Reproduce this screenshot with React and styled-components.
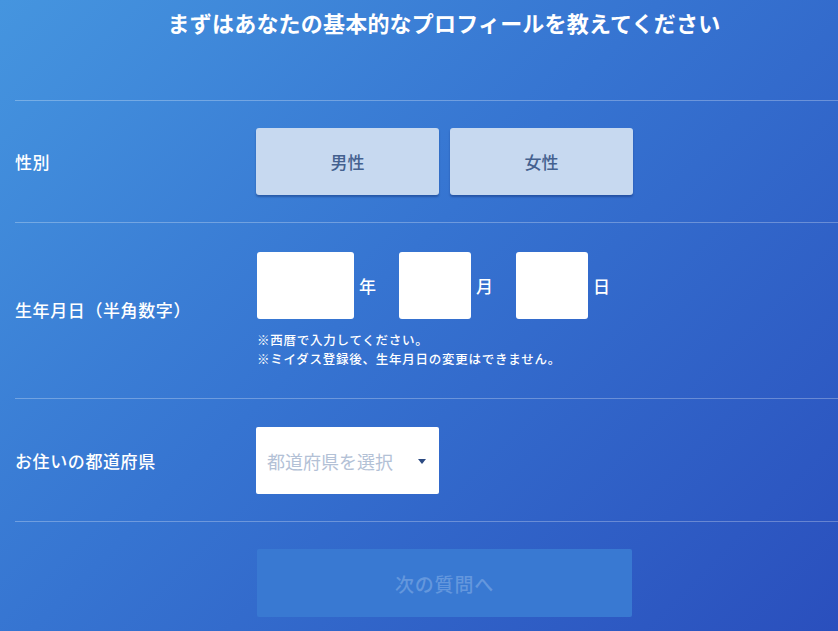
import React from 'react';
import styled, { createGlobalStyle } from 'styled-components';

const GlobalStyle = createGlobalStyle`
  html, body {
    margin: 0;
    padding: 0;
  }
  body {
    font-family: "Noto Sans CJK JP", "Noto Sans", sans-serif;
  }
  * {
    box-sizing: border-box;
  }
`;

// Page shell
const Page = styled.div`
  min-height: 631px;
  background: linear-gradient(135deg, #4595df 0%, #3674d1 45%, #2a4fbd 100%);
  overflow: hidden;
`;

const Header = styled.header`
  height: 100px;
  padding-top: 8px;
  text-align: center;
`;

const Title = styled.h1`
  margin: 0;
  padding-left: 50px;
  font-size: 22px;
  line-height: 28px;
  font-weight: 700;
  color: #fff;
  letter-spacing: 0.2px;
`;

const Form = styled.div`
  margin-left: 15px;
`;

const Row = styled.section`
  display: grid;
  grid-template-columns: 241px 1fr;
  align-items: center;
  border-top: 1px solid rgba(255, 255, 255, 0.28);
  padding: ${(p) => p.$pad || '27px 0 27px'};
`;

const Label = styled.div`
  color: #fff;
  font-size: 17px;
  font-weight: 500;
  line-height: 24px;
  letter-spacing: 0.6px;
`;

const Choices = styled.div`
  display: flex;
  gap: 11px;
`;

const ChoiceButton = styled.button`
  width: 183px;
  height: 67px;
  border: none;
  border-radius: 3px;
  background: #c7d9f0;
  box-shadow: 0 2px 2px rgba(10, 30, 90, 0.35);
  color: #44618f;
  font-family: inherit;
  font-size: 17px;
  font-weight: 500;
  cursor: pointer;
`;

const DateLine = styled.div`
  display: flex;
  align-items: center;
  padding-left: 1px;
`;

const DateBox = styled.input`
  width: ${(p) => p.$w}px;
  height: 67px;
  border: none;
  border-radius: 3px;
  background: #fff;
  padding: 0 8px;
  font-family: inherit;
  font-size: 18px;
  outline: none;
`;

const Unit = styled.span`
  margin: 0 23px 0 5px;
  color: #fff;
  font-size: 17px;
  font-weight: 500;
`;

const Notes = styled.div`
  margin-top: 11px;
  padding-left: 1px;
  color: #fff;
  font-size: 12.5px;
  font-weight: 500;
  line-height: 19px;
  letter-spacing: 0.75px;
`;

const Select = styled.div`
  display: flex;
  align-items: center;
  justify-content: space-between;
  width: 183px;
  height: 67px;
  padding: 0 13px 0 11px;
  border-radius: 2px;
  background: #fff;
  color: #b3c1d6;
  font-size: 18px;
`;

const Caret = styled.span`
  width: 0;
  height: 0;
  border-left: 4.5px solid transparent;
  border-right: 4.5px solid transparent;
  border-top: 5px solid #2c4a82;
  margin-top: 2px;
`;

const Footer = styled.div`
  border-top: 1px solid rgba(255, 255, 255, 0.28);
  padding: 27px 0 0 242px;
`;

const NextButton = styled.button`
  width: 375px;
  height: 68px;
  border: none;
  border-radius: 2px;
  background: #3979d2;
  color: #6497dd;
  font-family: inherit;
  font-size: 19px;
  font-weight: 500;
  letter-spacing: 0.8px;
`;

const dateFields = [
  { unit: '年', width: 97 },
  { unit: '月', width: 72 },
  { unit: '日', width: 72 },
];

const App = () => (
  <Page>
    <GlobalStyle />
    <Header>
      <Title>まずはあなたの基本的なプロフィールを教えてください</Title>
    </Header>
    <Form>
      <Row>
        <Label>性別</Label>
        <Choices>
          <ChoiceButton>男性</ChoiceButton>
          <ChoiceButton>女性</ChoiceButton>
        </Choices>
      </Row>
      <Row $pad="29px 0 30px">
        <Label>生年月日（半角数字）</Label>
        <div>
          <DateLine>
            {dateFields.map((f) => (
              <React.Fragment key={f.unit}>
                <DateBox $w={f.width} />
                <Unit>{f.unit}</Unit>
              </React.Fragment>
            ))}
          </DateLine>
          <Notes>
            ※西暦で入力してください。
            <br />
            ※ミイダス登録後、生年月日の変更はできません。
          </Notes>
        </div>
      </Row>
      <Row $pad="28px 0 27px">
        <Label>お住いの都道府県</Label>
        <Select>
          都道府県を選択
          <Caret />
        </Select>
      </Row>
      <Footer>
        <NextButton disabled>次の質問へ</NextButton>
      </Footer>
    </Form>
  </Page>
);

export default App;
